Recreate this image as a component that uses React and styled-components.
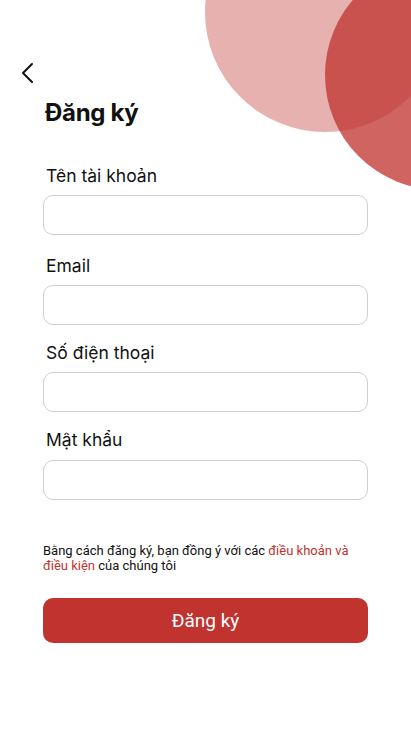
import React from 'react';
import styled, { createGlobalStyle } from 'styled-components';

const red = '#c0332f';

const GlobalStyle = createGlobalStyle`
  html, body {
    margin: 0;
    padding: 0;
    background: #fff;
  }
  * {
    box-sizing: border-box;
  }
`;

const Screen = styled.div`
  position: relative;
  width: 411px;
  height: 731px;
  overflow: hidden;
  background: #fff;
  font-family: Inter, 'Noto Sans', sans-serif;
  color: #111;
`;

const Bubble = styled.div`
  position: absolute;
  border-radius: 50%;
  background: ${red};
  left: ${(p) => p.$x - p.$r}px;
  top: ${(p) => p.$y - p.$r}px;
  width: ${(p) => p.$r * 2}px;
  height: ${(p) => p.$r * 2}px;
  opacity: ${(p) => p.$alpha};
`;

const Content = styled.div`
  position: relative;
  display: flex;
  flex-direction: column;
  padding: 60px 43px 0 43px;
`;

const BackButton = styled.button`
  display: flex;
  align-items: center;
  justify-content: center;
  width: 24px;
  height: 26px;
  margin-left: -27px;
  padding: 0;
  border: none;
  background: none;
  cursor: pointer;
`;

const Title = styled.h1`
  margin: 10px 0 0 2px;
  font-size: 24px;
  font-weight: 700;
  letter-spacing: -0.3px;
  line-height: 34px;
`;

const Form = styled.form`
  display: flex;
  flex-direction: column;
  margin-top: 34px;
`;

const Field = styled.label`
  display: flex;
  flex-direction: column;
  margin-bottom: ${(p) => p.$gap}px;
`;

const Label = styled.span`
  margin-left: 3px;
  font-size: 17.5px;
  line-height: 24px;
  color: #111;
`;

const Input = styled.input`
  height: 40px;
  margin-top: ${(p) => p.$top}px;
  border: 1px solid #cfcfd3;
  border-radius: 10px;
  padding: 0 12px;
  font-size: 16px;
  font-family: inherit;
  outline: none;
`;

const Terms = styled.p`
  margin: 43px 0 0 0;
  font-family: Roboto, 'Liberation Sans', sans-serif;
  font-size: 13px;
  line-height: 15px;
  color: #111;
`;

const TermsLink = styled.a`
  color: ${red};
  text-decoration: none;
`;

const Submit = styled.button`
  margin-top: 25px;
  height: 45px;
  border: none;
  border-radius: 10px;
  background: ${red};
  color: #fff;
  font-family: Roboto, 'Liberation Sans', sans-serif;
  font-size: 19px;
  cursor: pointer;
`;

const fields = [
  { label: 'Tên tài khoản', type: 'text', top: 7, gap: 19 },
  { label: 'Email', type: 'email', top: 7, gap: 16 },
  { label: 'Số điện thoại', type: 'tel', top: 7, gap: 16 },
  { label: 'Mật khẩu', type: 'password', top: 8, gap: 0 },
];

const App = () => (
  <Screen>
    <GlobalStyle />
    <Bubble $x={325} $y={12} $r={120} $alpha={0.38} />
    <Bubble $x={440} $y={75} $r={115} $alpha={0.76} />
    <Content>
      <BackButton type="button" aria-label="Quay lại">
        <svg width="14" height="22" viewBox="0 0 14 22" fill="none">
          <polyline
            points="11,2 2,11 11,20"
            stroke="#111"
            strokeWidth="2"
            strokeLinecap="round"
            strokeLinejoin="round"
          />
        </svg>
      </BackButton>
      <Title>Đăng ký</Title>
      <Form onSubmit={(e) => e.preventDefault()}>
        {fields.map((f) => (
          <Field key={f.label} $gap={f.gap}>
            <Label>{f.label}</Label>
            <Input type={f.type} $top={f.top} />
          </Field>
        ))}
        <Terms>
          Bằng cách đăng ký, bạn đồng ý với các{' '}
          <TermsLink href="#">điều khoản và điều kiện</TermsLink> của chúng tôi
        </Terms>
        <Submit type="submit">Đăng ký</Submit>
      </Form>
    </Content>
  </Screen>
);

export default App;
